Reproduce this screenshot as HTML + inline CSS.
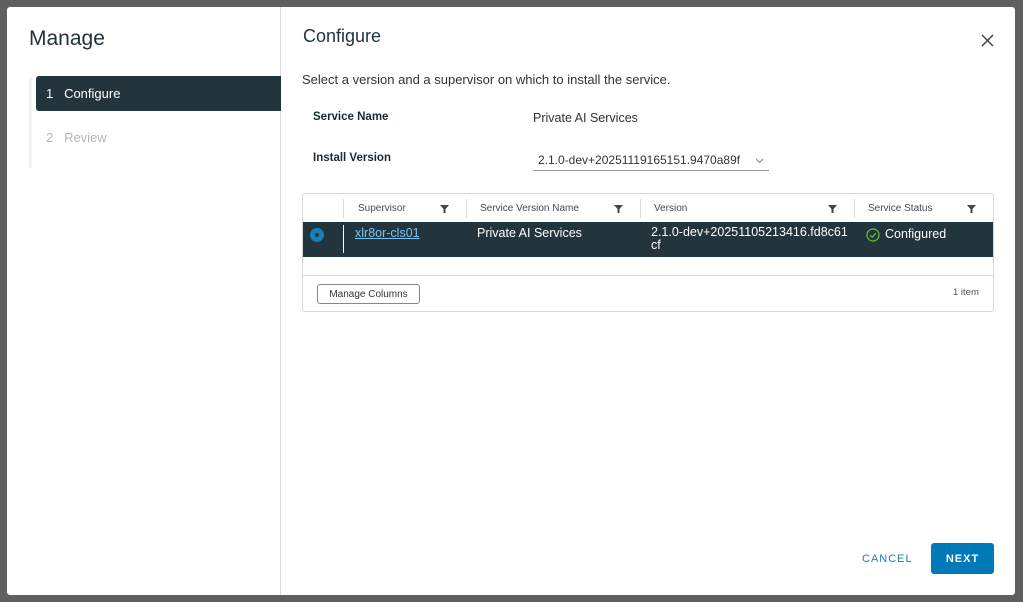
<!DOCTYPE html>
<html><head><style>
*{box-sizing:border-box;margin:0;padding:0}
body{width:1023px;height:602px;background:#5f5f5f;font-family:"Liberation Sans",sans-serif;position:relative;overflow:hidden;color:#1b2a32}
.modal{position:absolute;left:7px;top:7px;width:1008px;height:588px;background:#fff;border-radius:3px}
.left{position:absolute;left:0;top:0;width:274px;height:588px;border-right:1px solid #ddd}
.left h1{position:absolute;left:22px;top:20px;font-size:21px;font-weight:normal;color:#21333b}
.navline{position:absolute;left:22px;top:70px;width:3px;height:91px;background:#eef3f6}
.step1{position:absolute;left:29px;top:69px;width:245px;height:35px;background:#22343c;color:#fff;font-size:13px;line-height:35px;padding-left:10px;border-radius:3px 0 0 3px}
.step2{position:absolute;left:39px;top:123px;font-size:13px;color:#b5b5b5}
.abs{position:absolute}
.grid{left:295px;top:186px;width:692px;height:119px;border:1px solid #d7d7d7;border-radius:3px}
.hd{position:absolute;top:1px;height:28px;font-size:10px;color:#4a4a4a;line-height:28px}
.sep{position:absolute;top:5px;width:1px;height:19px;background:#ddd}
.f{position:absolute;top:11px}
.row{position:absolute;left:0;top:28px;width:690px;height:35px;background:#22343c;color:#fff;font-size:12.5px}
</style></head><body>
<div class="modal">
 <div class="left">
  <h1>Manage</h1>
  <div class="navline"></div>
  <div class="step1">1&nbsp;&nbsp;&nbsp;Configure</div>
  <div class="step2">2&nbsp;&nbsp;&nbsp;Review</div>
 </div>
 <div class="right">
  <div class="abs" style="left:296px;top:19px;font-size:18px;color:#21333b">Configure</div>
  <svg class="abs" style="left:974px;top:27px" width="13" height="13"><path d="M1 1L12 12M12 1L1 12" stroke="#444" stroke-width="1.5"/></svg>
  <div class="abs" style="left:295px;top:65px;font-size:13px;color:#333">Select a version and a supervisor on which to install the service.</div>
  <div class="abs" style="left:306px;top:104px;font-size:11.5px;font-weight:bold">Service Name</div>
  <div class="abs" style="left:526px;top:104px;font-size:12.5px;color:#333">Private AI Services</div>
  <div class="abs" style="left:306px;top:145px;font-size:11.5px;font-weight:bold">Install Version</div>
  <div class="abs" style="left:526px;top:146px;width:236px;height:18px;border-bottom:1px solid #999;font-size:12px;color:#333;padding-left:5px">2.1.0-dev+20251119165151.9470a89f
   <svg class="abs" style="left:222px;top:5px" width="9" height="6"><path d="M1 1L4.5 4.5L8 1" stroke="#888" fill="none"/></svg></div>
  <div class="abs grid">
   <div class="sep" style="left:40px"></div>
   <div class="hd" style="left:55px">Supervisor</div><svg class="f" style="left:137px" width="9" height="8"><path d="M0 0H9L5.5 4V8H3.5V4Z" fill="#444"/></svg>
   <div class="sep" style="left:163px"></div>
   <div class="hd" style="left:177px">Service Version Name</div><svg class="f" style="left:311px" width="9" height="8"><path d="M0 0H9L5.5 4V8H3.5V4Z" fill="#444"/></svg>
   <div class="sep" style="left:337px"></div>
   <div class="hd" style="left:351px">Version</div><svg class="f" style="left:525px" width="9" height="8"><path d="M0 0H9L5.5 4V8H3.5V4Z" fill="#444"/></svg>
   <div class="sep" style="left:551px"></div>
   <div class="hd" style="left:565px">Service Status</div><svg class="f" style="left:664px" width="9" height="8"><path d="M0 0H9L5.5 4V8H3.5V4Z" fill="#444"/></svg>
   <div class="row">
    <div class="abs" style="left:7px;top:6px;width:14px;height:14px;border-radius:50%;background:#1a7fb8"><div style="margin:5px;width:4px;height:4px;border-radius:50%;background:#22343c"></div></div>
    <div class="abs" style="left:40px;top:3px;width:1px;height:28px;background:#fff"></div>
    <div class="abs" style="left:52px;top:4px;color:#7cc6ee;text-decoration:underline">xlr8or-cls01</div>
    <div class="abs" style="left:174px;top:4px">Private AI Services</div>
    <div class="abs" style="left:348px;top:4px;line-height:13px">2.1.0-dev+20251105213416.fd8c61<br>cf</div>
    <svg class="abs" style="left:563px;top:6px" width="14" height="14"><circle cx="7" cy="7" r="6" stroke="#6fbf3c" stroke-width="1.2" fill="none"/><path d="M4 7.2L6.2 9.3L10 5" stroke="#6fbf3c" stroke-width="1.2" fill="none"/></svg>
    <div class="abs" style="left:582px;top:5px">Configured</div>
   </div>
   <div class="abs" style="left:0;top:81px;width:690px;height:1px;background:#ddd"></div>
   <div class="abs" style="left:14px;top:90px;width:103px;height:20px;border:1px solid #888;border-radius:3px;font-size:10px;line-height:19px;text-align:center;color:#333">Manage Columns</div>
   <div class="abs" style="left:650px;top:93px;font-size:9.5px;color:#555">1 item</div>
  </div>
  <div class="abs" style="left:855px;top:546px;font-size:11px;color:#1a7fb8;letter-spacing:1px">CANCEL</div>
  <div class="abs" style="left:924px;top:536px;width:63px;height:31px;background:#0079b8;border-radius:3px;color:#fff;font-size:11px;font-weight:bold;line-height:33px;text-align:center;letter-spacing:1px">NEXT</div>
 </div>
</div>
</body></html>
